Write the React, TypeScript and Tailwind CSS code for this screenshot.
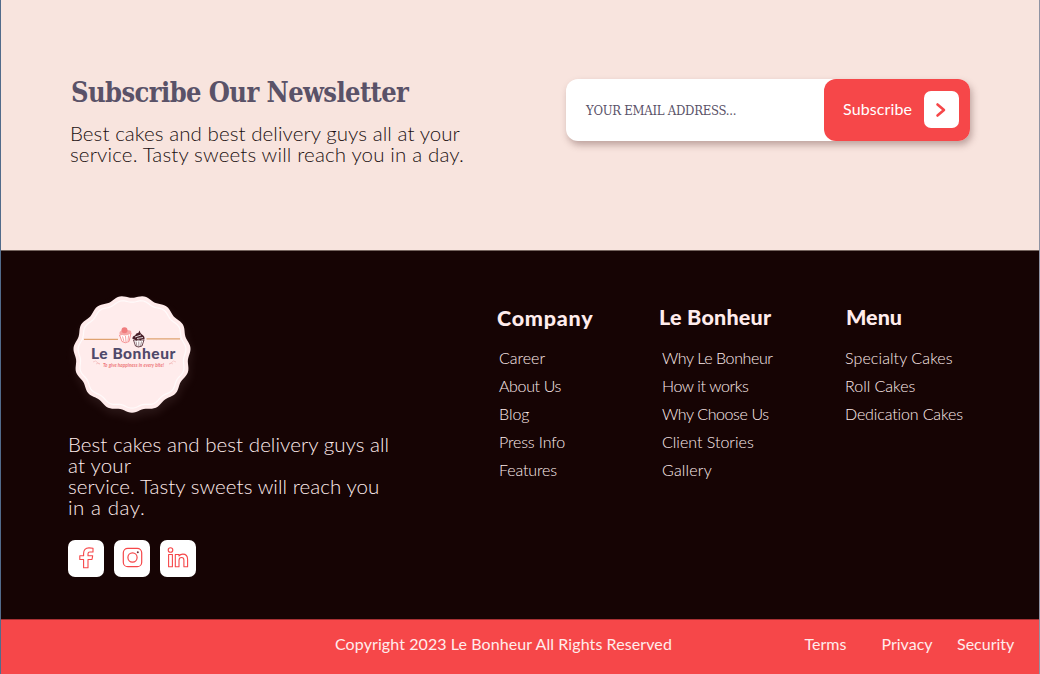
const scallop = (r: number, amp: number) => {
  const pts: string[] = [];
  for (let i = 0; i < 180; i++) {
    const a = (i * Math.PI) / 90;
    const q = r - amp * Math.cos(15 * (a + Math.PI / 2));
    pts.push(`${(60 + q * Math.cos(a)).toFixed(2)} ${(60 + q * Math.sin(a)).toFixed(2)}`);
  }
  return `M${pts.join('L')}Z`;
};

function Logo() {
  return (
    <div className="relative h-[120px] w-[120px]">
      <svg viewBox="0 0 120 120" className="h-[120px] w-[120px] overflow-visible drop-shadow-[1px_5px_5px_rgba(255,225,225,0.09)]">
        <path d={scallop(57.5, 1.3)} fill="#ffecec" />
        <path d={scallop(53, 1.2)} fill="none" stroke="#fffafa" strokeWidth="1.2" />
        <path d="M12 45.3H46M74.500 44.800H108" stroke="#dfa270" strokeWidth="1.2" />
        <g>
          <path d="M47.500 41L59 39L57 47.500Q53 50 50 47.500Z" fill="#fff" stroke="#f2777a" strokeWidth=".8" />
          <path d="M50.500 42.500L52 47.500M53.500 42L54 48M56.500 41.500L56 47" stroke="#f2777a" strokeWidth=".7" />
          <path d="M47.500 40Q47 37 50 36.500Q53 35 56 36.300Q60 36 59.200 39.500Q53 43 47.500 40Z" fill="#f6a6a6" />
          <circle cx="52.500" cy="36.300" r="3" fill="#f07c7e" />
        </g>
        <g>
          <path d="M61.500 46L72 46L70 52Q66 54 63.500 52Z" fill="#fff" stroke="#4a2029" strokeWidth=".8" />
          <path d="M64 47.500L65 52.500M66.800 47.500V53M69.500 47.500L68.500 52.500" stroke="#4a2029" strokeWidth=".5" />
          <path d="M60.500 45Q60 42 63 41.500Q64 39 66.500 38.800L67.500 36.500Q68 39 70 40.500Q73 42 72.500 45.500Q70 44 68.500 46.500Q66 44.500 64.500 46.700Q62 44.500 60.500 45Z" fill="#4a2029" />
          <path d="M63 43L69 41M65 44.500L71 43.500" stroke="#fff" strokeWidth=".8" />
        </g>
        <path d="M21 68q3-2 4 0t3 2M24 70q2-2 4 0M104 68q-3-2-4 0t-3 2M101 70q-2-2-4 0" fill="none" stroke="#f2b5b5" strokeWidth=".6" />
      </svg>
      <div className="absolute top-[51px] left-[19px] text-[15.5px] leading-[17px] font-black tracking-[0.55px] whitespace-nowrap text-[#50496a]">Le Bonheur</div>
      <div className="absolute top-[67px] left-[31px] text-[4.6px] leading-[8px] font-bold italic tracking-[0.05px] whitespace-nowrap text-[#ee7779]">To give happiness in every bite!</div>
    </div>
  );
}

const badge = 'flex h-[37px] w-[36px] items-center justify-center rounded-[7px] bg-white';

function Socials() {
  return (
    <div className="flex gap-[10px]">
      <a className={badge}>
        <svg viewBox="0 0 24 24" className="h-[24px] w-[24px]" fill="none" stroke="#f64749" strokeWidth="1.1" strokeLinejoin="round">
          <path d="M19 2.200V6H15.800Q14 6 14 7.800V9.700H18.700L18 13.500H14V21.700H9.600V13.500H5.800V9.700H9.600V7.500Q9.600 1.900 15 1.900Q17.500 1.900 19 2.200Z" />
        </svg>
      </a>
      <a className={badge}>
        <svg viewBox="0 0 24 24" className="h-[24px] w-[24px]" fill="none" stroke="#f64749" strokeWidth="1.2">
          <rect x="3.300" y="2.300" width="18.400" height="18.400" rx="4.500" />
          <circle cx="12.500" cy="11.500" r="4.600" />
          <circle cx="17.800" cy="6.200" r="1" fill="#6b3038" stroke="none" />
        </svg>
      </a>
      <a className={badge}>
        <svg viewBox="0 0 24 24" className="h-[24px] w-[24px]" fill="none" stroke="#f64749" strokeWidth="1.1" strokeLinejoin="round">
          <circle cx="4.500" cy="4" r="2.300" />
          <path d="M2.600 8.500H6.400V20.800H2.600ZM9.300 8.500H13V10Q14.300 8.100 16.800 8.100Q21.600 8.100 21.600 13.500V20.800H17.900V14.200Q17.900 11.500 15.600 11.500Q13 11.500 13 14.400V20.800H9.300Z" />
        </svg>
      </a>
    </div>
  );
}

const link = 'h-[28px] text-[16px] leading-[28px] font-light whitespace-nowrap text-[#ffecec]';
const head = 'text-[21.5px] leading-[24px] font-black whitespace-nowrap text-[#ffecec]';

export default function App() {
  return (
    <div className="flex h-[674px] w-[1040px] flex-col overflow-hidden border-x border-l-[#526b8b] border-r-[#8f93a3] bg-[#160404] font-['Lato',sans-serif]">
      <section className="flex h-[251px] shrink-0 border-b border-[#75655f] bg-[#f8e4de]">
        <div className="ml-[69px] w-[496px] pt-[72px]">
          <h1 className="ml-[1px] font-['DejaVu_Serif_Condensed','DejaVu_Serif',serif] text-[27px] leading-[41px] font-bold tracking-[-0.58px] whitespace-nowrap text-[#5a5268]">Subscribe Our Newsletter</h1>
          <p className="mt-[10px] text-[20.5px] leading-[21px] font-light whitespace-nowrap text-[#1b1011]">
            <span className="block tracking-[0.07px]">Best cakes and best delivery guys all at your</span>
            <span className="block tracking-[0.15px]">service. Tasty sweets will reach you in a day.</span>
          </p>
        </div>
        <div className="mt-[79px] flex h-[62px] w-[404px] rounded-[12px] bg-white shadow-[2px_4px_7px_rgba(80,40,40,0.35)]">
          <div className="w-[258px] pl-[20px] font-['DejaVu_Serif_Condensed','DejaVu_Serif',serif] text-[13px] leading-[63px] tracking-[-0.27px] whitespace-nowrap text-[#5a5268]">YOUR EMAIL ADDRESS...</div>
          <button className="flex w-[146px] items-center rounded-[12px] bg-[#f64749] pl-[19px] text-white">
            <span className="w-[80.500px] pb-[2px] text-left text-[16px] tracking-[0.11px]">Subscribe</span>
            <span className="mb-[1px] flex h-[37px] w-[35px] items-center justify-center rounded-[7px] bg-white">
              <svg viewBox="0 0 16 20" className="h-[20px] w-[16px]" fill="none" stroke="#f64749" strokeWidth="2.600" strokeLinecap="round" strokeLinejoin="round"><path d="M4.500 4.500L11 10L4.500 15.500" /></svg>
            </span>
          </button>
        </div>
      </section>
      <footer className="flex h-[368px] shrink-0 bg-[#160404]">
        <div className="ml-[67px] w-[429px] pt-[43px]">
          <div className="ml-[4px]"><Logo /></div>
          <p className="mt-[20px] text-[20.5px] leading-[21px] font-light whitespace-nowrap text-[#ffecec]">
            <span className="block tracking-[0.05px]">Best cakes and best delivery guys all</span>
            <span className="block tracking-[0.2px]">at your</span>
            <span className="block tracking-[0.06px]">service. Tasty sweets will reach you</span>
            <span className="block tracking-[0.55px]">in a day.</span>
          </p>
          <div className="mt-[21.500px]"><Socials /></div>
        </div>
        <div className="w-[162px] pt-[55px]">
          <h2 className={`${head} tracking-[0.75px]`}>Company</h2>
          <ul className="mt-[14px] ml-[2px]">
            <li className={link}>Career</li>
            <li className={`${link} tracking-[-0.35px]`}>About Us</li>
            <li className={link}>Blog</li>
            <li className={`${link} tracking-[-0.14px]`}>Press Info</li>
            <li className={`${link} tracking-[-0.12px]`}>Features</li>
          </ul>
        </div>
        <div className="w-[185px] pt-[54px]">
          <h2 className={`${head} tracking-[0.22px]`}>Le Bonheur</h2>
          <ul className="mt-[15px] ml-[3px]">
            <li className={`${link} tracking-[-0.4px]`}>Why Le Bonheur</li>
            <li className={`${link} tracking-[-0.4px]`}>How it works</li>
            <li className={`${link} tracking-[-0.4px]`}>Why Choose Us</li>
            <li className={link}>Client Stories</li>
            <li className={`${link} tracking-[0.2px]`}>Gallery</li>
          </ul>
        </div>
        <div className="pt-[54px]">
          <h2 className={`${head} ml-[2px]`}>Menu</h2>
          <ul className="mt-[15px] ml-[1px]">
            <li className={`${link} tracking-[0.1px]`}>Specialty Cakes</li>
            <li className={link}>Roll Cakes</li>
            <li className={`${link} tracking-[-0.13px]`}>Dedication Cakes</li>
          </ul>
        </div>
      </footer>
      <div className="flex h-[55px] shrink-0 border-t border-[#a83033] bg-[#f64749] pt-[12px] text-[16px] leading-[24px] whitespace-nowrap text-[#ffecec]">
        <span className="ml-[334px] w-[469.500px] tracking-[0.09px]">Copyright 2023 Le Bonheur All Rights Reserved</span>
        <span className="w-[77px]">Terms</span>
        <span className="w-[75.500px]">Privacy</span>
        <span>Security</span>
      </div>
    </div>
  );
}
